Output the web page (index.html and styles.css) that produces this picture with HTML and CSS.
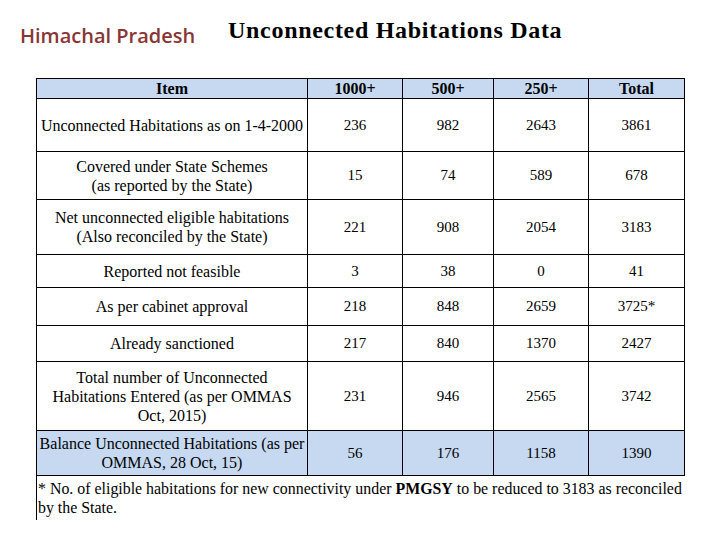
FILE: index.html
```html
<!DOCTYPE html>
<html>
<head>
<meta charset="utf-8">
<link rel="stylesheet" href="styles.css">
</head>
<body>
<div class="page">
  <div class="top">
    <div class="state">Himachal Pradesh</div>
    <h1 class="title">Unconnected Habitations Data</h1>
  </div>
  <table class="data">
    <colgroup>
      <col class="c-item"><col class="c-n1"><col class="c-n2"><col class="c-n3"><col class="c-n4">
    </colgroup>
    <tr class="head h-hdr"><th>Item</th><th>1000+</th><th>500+</th><th>250+</th><th>Total</th></tr>
    <tr class="h-r1"><td class="item">Unconnected Habitations as on 1-4-2000</td><td>236</td><td>982</td><td>2643</td><td>3861</td></tr>
    <tr class="h-r2"><td class="item">Covered under State Schemes<br>(as reported by the State)</td><td>15</td><td>74</td><td>589</td><td>678</td></tr>
    <tr class="h-r3"><td class="item">Net unconnected eligible habitations<br>(Also reconciled by the State)</td><td>221</td><td>908</td><td>2054</td><td>3183</td></tr>
    <tr class="h-r4"><td class="item">Reported not feasible</td><td>3</td><td>38</td><td>0</td><td>41</td></tr>
    <tr class="h-r5"><td class="item">As per cabinet approval</td><td>218</td><td>848</td><td>2659</td><td>3725*</td></tr>
    <tr class="h-r6"><td class="item">Already sanctioned</td><td>217</td><td>840</td><td>1370</td><td>2427</td></tr>
    <tr class="h-r7"><td class="item">Total number of Unconnected<br>Habitations Entered (as per OMMAS<br>Oct, 2015)</td><td>231</td><td>946</td><td>2565</td><td>3742</td></tr>
    <tr class="hl h-r8"><td class="item">Balance Unconnected Habitations (as per<br>OMMAS, 28 Oct, 15)</td><td>56</td><td>176</td><td>1158</td><td>1390</td></tr>
  </table>
  <div class="note">* No. of eligible habitations for new connectivity under <b>PMGSY</b> to be reduced to 3183 as reconciled<br>by the State.</div>
</div>
</body>
</html>
```
FILE: styles.css
```css
html, body { margin: 0; padding: 0; background: #fff; }
.page { width: 720px; height: 540px; position: relative; }
.top { display: flex; align-items: baseline; padding: 17px 0 0 20px; height: 60px; box-sizing: border-box; }
.state { font-family: "Open Sans", sans-serif; font-weight: 600; font-size: 20px; color: #8a3535; width: 208px; position: relative; top: 5px; white-space: nowrap; }
.title { margin: 0; font-family: "Liberation Serif", serif; font-weight: bold; font-size: 24px; letter-spacing: 0.7px; color: #000; white-space: nowrap; }
.data { margin: 18px 0 0 36px; border-collapse: collapse; table-layout: fixed; width: 649px; font-family: "Liberation Serif", serif; font-size: 15px; color: #000; }
.c-item { width: 271px; } .c-n1 { width: 95px; } .c-n2 { width: 91px; } .c-n3 { width: 95px; } .c-n4 { width: 96px; }
.data th, .data td { border: 1px solid #000; padding: 0; text-align: center; vertical-align: middle; line-height: 19px; }
.data th { font-weight: bold; font-size: 16px; }
.head th, .hl td { background: #c6d9f0; }
.data td.item { padding: 0 1px; font-size: 16px; white-space: nowrap; }
.h-hdr { height: 19px; } .h-r1 { height: 53px; } .h-r2 { height: 48px; } .h-r3 { height: 55px; }
.h-r4 { height: 33px; } .h-r5 { height: 38px; } .h-r6 { height: 36px; } .h-r7 { height: 69px; } .h-r8 { height: 45px; }
.note { margin-left: 36px; width: 660px; border-left: 1px solid #000; font-family: "Liberation Serif", serif; font-size: 15.9px; line-height: 19px; padding: 3px 0 3px 1px; color: #000; white-space: nowrap; }
```
